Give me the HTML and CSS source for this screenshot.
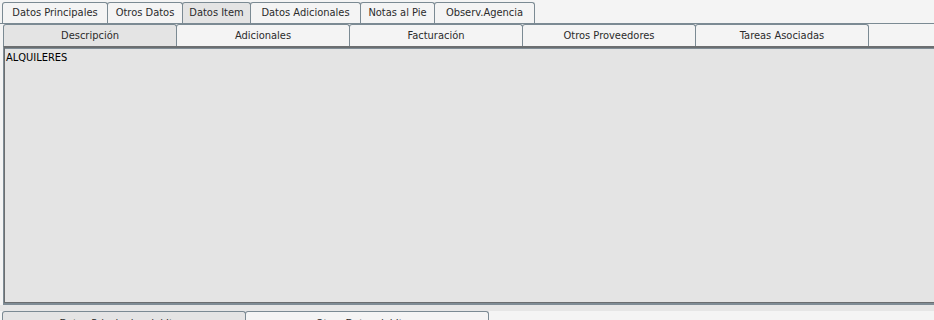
FILE: index.html
```html
<!DOCTYPE html>
<html lang="es">
<head>
    <meta charset="UTF-8">
    <title>Item</title>
    <link rel="stylesheet" href="styles.css">
</head>
<body>
    <div class="tabs top-tabs">
        <div class="tab">Datos Principales</div>
        <div class="tab">Otros Datos</div>
        <div class="tab active">Datos Item</div>
        <div class="tab">Datos Adicionales</div>
        <div class="tab">Notas al Pie</div>
        <div class="tab">Observ.Agencia</div>
    </div>

    <div class="tabs sub-tabs">
        <div class="tab active">Descripción</div>
        <div class="tab">Adicionales</div>
        <div class="tab">Facturación</div>
        <div class="tab">Otros Proveedores</div>
        <div class="tab">Tareas Asociadas</div>
    </div>

    <div class="panel">
        <div class="memo">ALQUILERES</div>
    </div>

    <div class="tabs bottom-tabs">
        <div class="tab active">Datos Principales del Item</div>
        <div class="tab">Otros Datos del Item</div>
    </div>
</body>
</html>
```

FILE: styles.css
```css
html, body { margin: 0; padding: 0; }
body {
    width: 934px;
    height: 320px;
    overflow: hidden;
    background: #f4f4f4;
    font-family: "DejaVu Sans Condensed", "DejaVu Sans", sans-serif;
    font-size: 11px;
    color: #2b2b2b;
}

.tabs { display: flex; }
.tab {
    box-sizing: border-box;
    border: 1px solid #7b8a93;
    border-bottom: none;
    border-radius: 3px 3px 0 0;
    margin-left: -1px;
    background: #f4f4f4;
    text-align: center;
    white-space: nowrap;
}
.tab:first-child { margin-left: 0; }
.tab.active { background: #e4e4e4; }

/* fila superior */
.top-tabs {
    padding: 2px 0 0 2px;
    border-bottom: 1px solid #7b8a93;
}
.top-tabs .tab {
    height: 21px;
    line-height: 20px;
}
.top-tabs .tab:nth-child(1) { width: 106px; }
.top-tabs .tab:nth-child(2) { width: 76px; }
.top-tabs .tab:nth-child(3) { width: 69px; }
.top-tabs .tab:nth-child(4) { width: 111px; }
.top-tabs .tab:nth-child(5) { width: 75px; }
.top-tabs .tab:nth-child(6) { width: 101px; }

/* fila de descripcion */
.sub-tabs { padding-left: 3px; }
.sub-tabs .tab {
    width: 174px;
    height: 22px;
    line-height: 21px;
}

.panel {
    height: 256px;
    margin-left: 3px;
    background: #e4e4e4;
    border-top: 1px solid #6b6e70;
    border-left: 1px solid #7f8c95;
    border-bottom: 2px solid #7f8c95;
    box-shadow: inset 1px 1px 0 #6b6e70, inset 0 -1px 0 #6b6e70, inset 0 2px 0 #7f8c95;
}
.memo {
    padding: 4px 0 0 2px;
    color: #000;
    font-size: 11px;
}

.bottom-tabs {
    padding: 6px 0 0 2px;
    background: linear-gradient(#e6e6e6 6px, #f4f4f4 6px);
}
.bottom-tabs .tab {
    width: 244px;
    height: 20px;
    line-height: 18px;
    padding-top: 3px;
}
```
